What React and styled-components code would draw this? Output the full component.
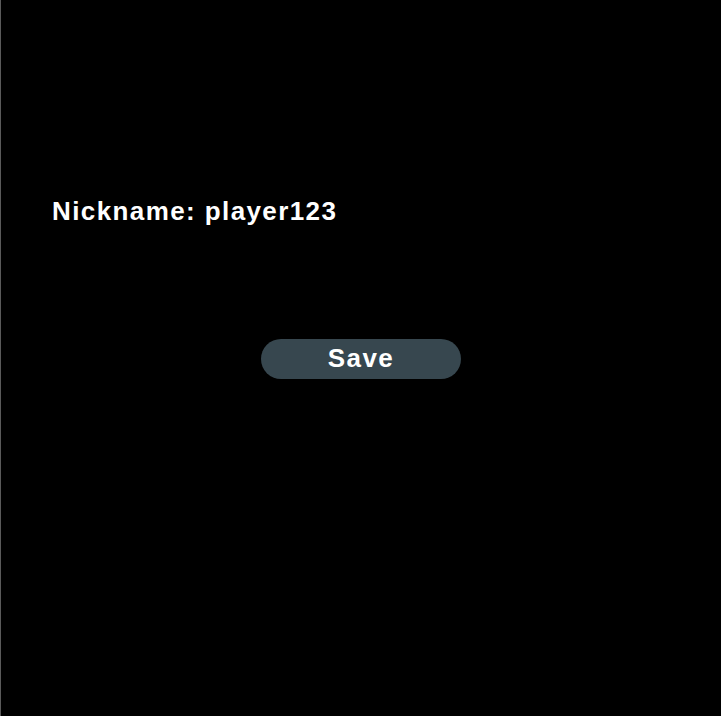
import React from "react";
import styled, { createGlobalStyle } from "styled-components";

const Global = createGlobalStyle`
  html, body { margin: 0; padding: 0; background: #000; }
  body { font-family: "Liberation Sans", Arial, sans-serif; }
`;

const Page = styled.div`
  width: 721px;
  height: 716px;
  box-sizing: border-box;
  background: #000;
  border-left: 1px solid #5a5a5a;
  display: flex;
  flex-direction: column;
  padding: 196px 0 0 51px;
`;

const Label = styled.div`
  color: #fff;
  font-size: 26px;
  font-weight: 700;
  letter-spacing: 1.4px;
  line-height: 30px;
`;

const ButtonRow = styled.div`
  display: flex;
  justify-content: center;
  margin-top: 113px;
  margin-left: -51px;
`;

const SaveButton = styled.button`
  width: 200px;
  height: 40px;
  border: none;
  border-radius: 20px;
  background: #37474f;
  color: #fff;
  font-family: "Liberation Sans", Arial, sans-serif;
  font-size: 26px;
  font-weight: 700;
  letter-spacing: 1.4px;
  line-height: 38px;
  padding: 0 0 2px;
  cursor: pointer;
`;

export default function App() {
  return (
    <>
      <Global />
      <Page>
        <Label>Nickname: player123</Label>
        <ButtonRow>
          <SaveButton>Save</SaveButton>
        </ButtonRow>
      </Page>
    </>
  );
}
